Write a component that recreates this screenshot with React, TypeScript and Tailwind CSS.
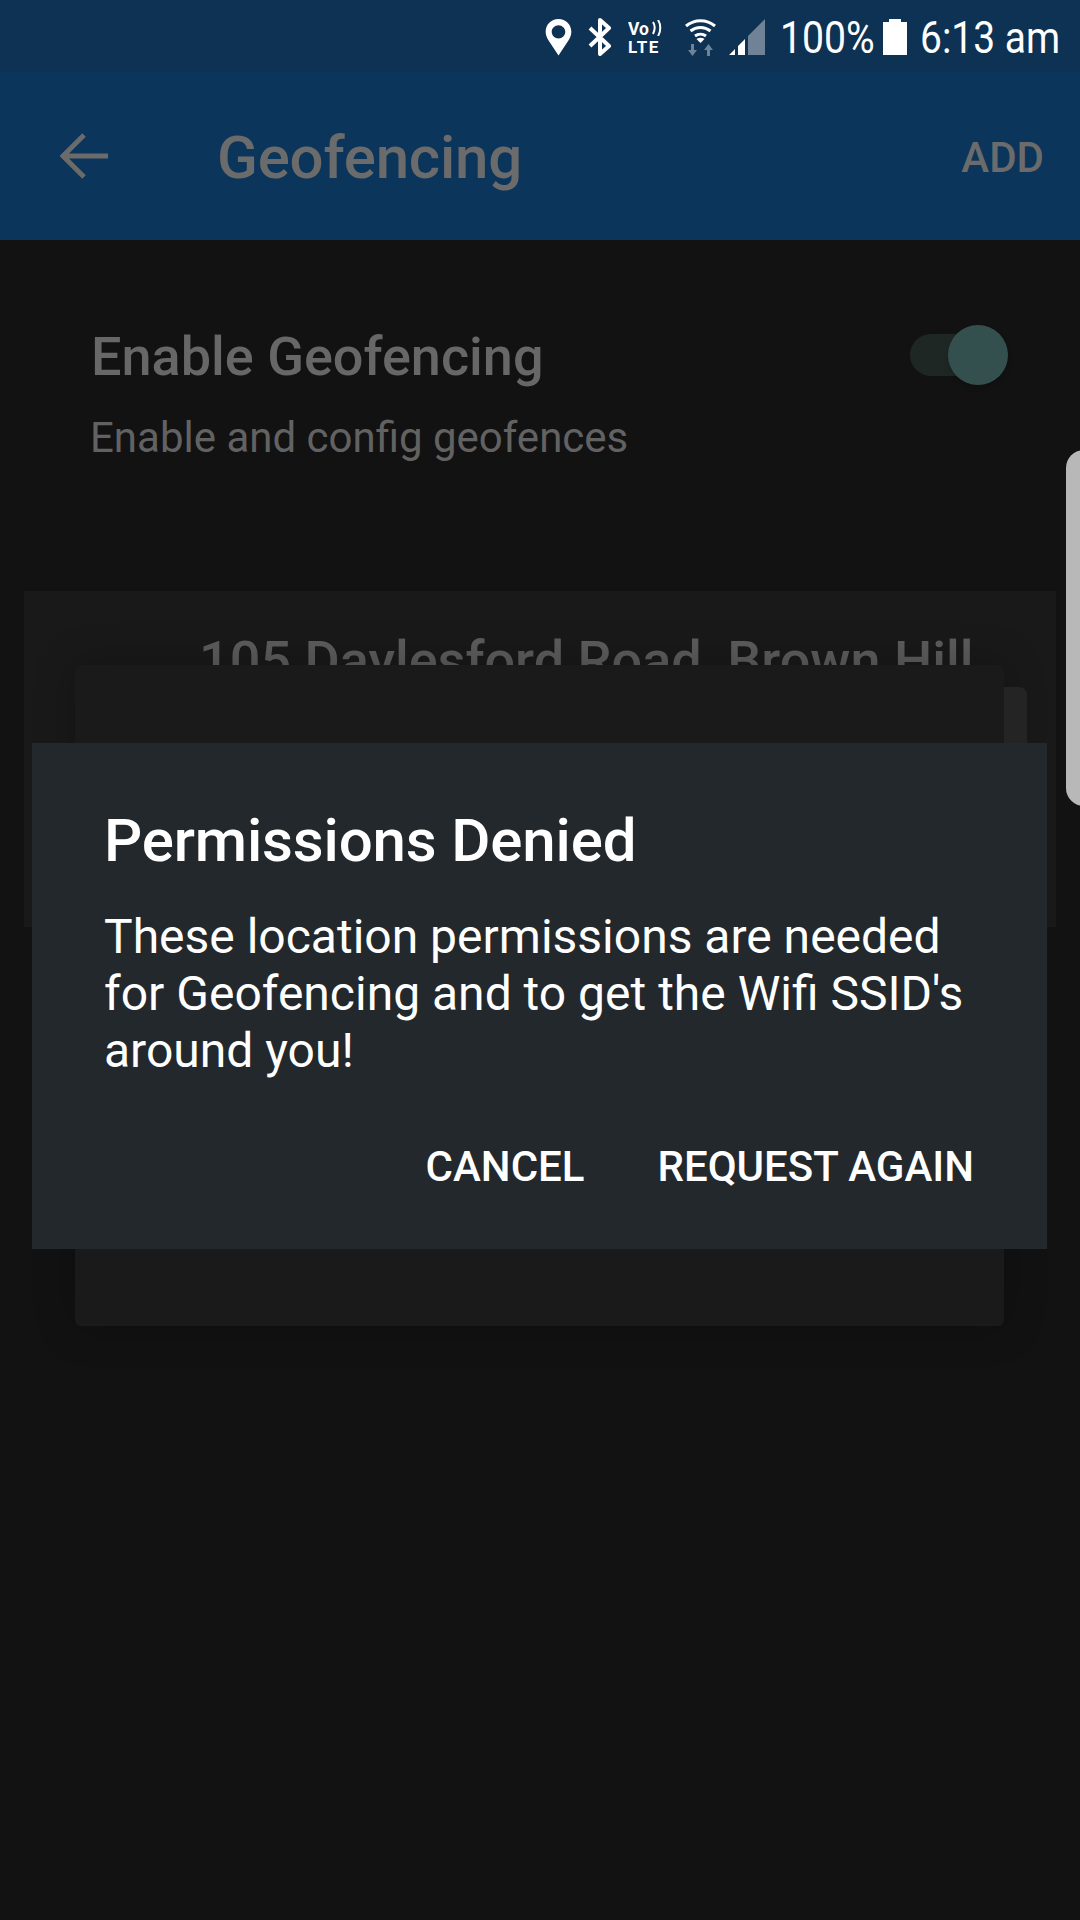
import React from 'react'

const StatusIcons: React.FC = () => (
    <div className="flex items-center text-white h-full pt-[2px]">
        {/* location pin */}
        <svg width="27" height="37" viewBox="0 0 26 36">
            <path fillRule="evenodd" fill="#fff" d="M13 0C5.800 0 .5 5.400 .5 12.400c0 3.200 1.300 6 3 8.800L13 35.500l9.500-14.300c1.700-2.800 3-5.600 3-8.800C25.500 5.400 20.200 0 13 0zm0 6c3.700 0 6.600 2.900 6.600 6.500S16.700 19 13 19s-6.600-2.900-6.600-6.500S9.300 6 13 6z" />
        </svg>
        {/* bluetooth */}
        <svg width="24" height="38" viewBox="0 0 24 38" className="ml-[16px]">
            <path fill="none" stroke="#fff" strokeWidth="4" strokeLinejoin="round" d="M2 10l19 18-9 8V2l9 8L2 28" />
        </svg>
        {/* volte */}
        <div className="ml-[16px] w-[35px] h-[36px] relative font-bold leading-none">
            <span className="absolute left-0 top-[0px] text-[19px] scale-x-[0.92] origin-left">Vo</span>
            <svg width="12" height="16" viewBox="0 0 12 16" className="absolute left-[23px] top-[1px]">
                <path fill="none" stroke="#fff" strokeWidth="2" d="M2 2c2 3 2 8 0 12M7 0c3 4 3 12 0 16" />
            </svg>
            <span className="absolute left-0 top-[20px] text-[17px] tracking-[1.5px]">LTE</span>
        </div>
        {/* wifi with arrows */}
        <svg width="33" height="38" viewBox="0 0 33 38" className="ml-[21px]">
            <path fill="none" stroke="#fff" strokeWidth="3" d="M2 8c8.500-7 20.500-7 29 0M6.500 13c6-4.800 14-4.800 20 0M11 18c3.200-2.400 7.800-2.400 11 0" />
            <path fill="#fff" d="M16.500 25l-4-4c2.400-1.800 5.600-1.800 8 0z" />
            <path fill="#6f8296" d="M7 26h3v6h3l-4.500 6L4 32h3zM23 38h3v-6h3l-4.500-6-4.500 6h3z" />
        </svg>
        {/* signal */}
        <svg width="36" height="36" viewBox="0 0 36 36" className="ml-[12px]">
            <path fill="#6f8296" d="M19 17L36 0v36H19z" />
            <path fill="#fff" d="M0 36l6-6v6zM9 27l7-7v16H9z" />
        </svg>
        <div className="ml-[15px] w-[94px] text-[44px] leading-none whitespace-nowrap origin-left scale-x-[0.89] translate-y-[1px]">100%</div>
        <svg width="24" height="36" viewBox="0 0 24 36" className="ml-[9px]">
            <path fill="#fff" d="M6 0h12v3h6v33H0V3h6z" />
        </svg>
        <div className="ml-[13px] w-[141px] text-[44px] leading-none whitespace-nowrap origin-left scale-x-[0.885] translate-y-[1px]">6:13 am</div>
    </div>
)

const App: React.FC = () => {
    return (
        <div className="relative w-[1080px] h-[1920px] overflow-hidden bg-[#121212] font-['Roboto',sans-serif]">
            <div className="h-[72px] bg-[#0d3253] flex justify-end pr-[19px]">
                <StatusIcons />
            </div>
            <div className="h-[168px] bg-[#0c355c] flex items-center">
                <svg width="48" height="48" viewBox="0 0 48 48" className="ml-[60px]">
                    <path fill="none" stroke="#6b6b6b" strokeWidth="5" d="M48 24H5M24 3L3 24l21 21" />
                </svg>
                <div className="ml-[109px] mt-[3px] text-[60px] font-medium text-[#6b6b6b] leading-none tracking-[-0.2px]">Geofencing</div>
                <div className="ml-auto mr-[36px] mt-[4px] text-[42px] font-medium text-[#6b6b6b] leading-none">ADD</div>
            </div>

            <div className="flex items-start justify-between pl-[91px] pr-[72px] pt-[86px]">
                <div>
                    <div className="text-[54px] font-medium text-[#676767] leading-[62px]">Enable Geofencing</div>
                    <div className="mt-[25px] ml-[-1px] text-[42px] text-[#626262] leading-[50px]">Enable and config geofences</div>
                </div>
                {/* switch */}
                <div className="relative w-[98px] h-[60px] mt-[-1px]">
                    <div className="absolute left-[0px] top-[9px] w-[82px] h-[42px] rounded-full bg-[#1f2725]" />
                    <div className="absolute left-[38px] top-0 w-[60px] h-[60px] rounded-full bg-[#34504e] shadow-md" />
                </div>
            </div>

            {/* geofence card behind the dialogs */}
            <div className="mx-[24px] mt-[128px] h-[336px] bg-[#191919] overflow-hidden pl-[175px] pt-[39px]">
                <div className="text-[54px] font-medium text-[#5c5c5c] leading-[62px] whitespace-nowrap">105 Daylesford Road, Brown Hill</div>
            </div>

            {/* map sheet */}
            <div className="absolute left-[75px] top-[665px] w-[929px] h-[661px] rounded-[6px] bg-[#1a1a1a] shadow-[0_0_40px_rgba(0,0,0,0.25)]" />
            <div className="absolute left-[1004px] top-[687px] w-[23px] h-[60px] rounded-tr-[8px] bg-[#242424]" />

            {/* edge panel handle */}
            <div className="absolute left-[1066px] top-[450px] w-[30px] h-[356px] rounded-l-[18px] bg-[#b8b8b8]" />

            {/* alert */}
            <div className="absolute left-[32px] top-[743px] w-[1015px] h-[506px] bg-[#22282c] pl-[72px] pr-[73px] pt-[63px]">
                <div className="text-[60px] font-medium text-white leading-[70px] tracking-[-0.15px]">Permissions Denied</div>
                <div className="mt-[32px] text-[48px] text-white leading-[57px]">
                    These location permissions are needed<br />
                    for Geofencing and to get the Wifi SSID's<br />
                    around you!
                </div>
                <div className="flex justify-end gap-[73px] mt-[63px] text-[42px] font-medium text-white leading-[50px]">
                    <div>CANCEL</div>
                    <div>REQUEST AGAIN</div>
                </div>
            </div>
        </div>
    )
}

export default App
